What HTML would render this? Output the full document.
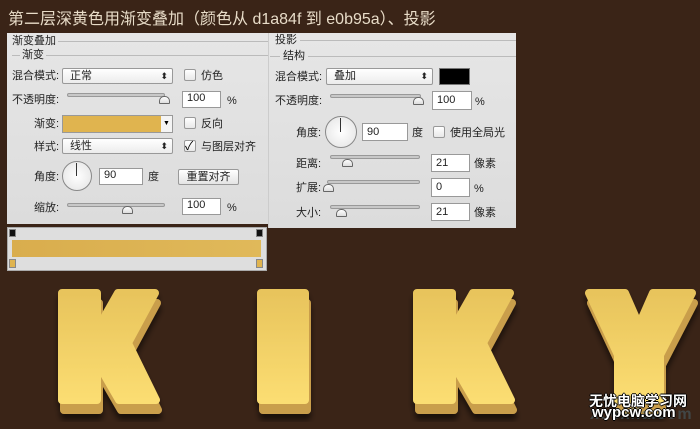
<!DOCTYPE html>
<html><head><meta charset="utf-8"><style>
*{margin:0;padding:0;box-sizing:border-box}
body{width:700px;height:429px;overflow:hidden;background:#3a2417;font-family:"Liberation Sans","Noto Sans CJK SC",sans-serif;position:relative}
.a{position:absolute}
.t{font-size:11px;color:#222;white-space:nowrap;line-height:12px}
.panel{background:linear-gradient(#e6e6e6,#dcdcdc);}
.dd{background:linear-gradient(#fff,#ececec);border:1px solid #999;border-radius:2px;font-size:11px;padding-left:7px;line-height:14px;color:#222}
.dd:after{content:"⬍";position:absolute;right:4px;top:0;font-size:9px}
.in{background:#fff;border:1px solid #999;font-size:11px;padding-left:4px;color:#222}
.cb{background:linear-gradient(#fff,#e8e8e8);border:1px solid #999;border-radius:2px;width:12px;height:12px}
.sl{height:4px;border:1px solid #999;border-radius:2px;background:#c8c8c8}
.th{width:11px;height:8px;border:1px solid #666;border-radius:5px 5px 1px 1px;background:linear-gradient(#fff,#ddd)}
.dial{border-radius:50%;border:1px solid #888;background:radial-gradient(#fff,#e2e2e2)}
.hl{height:1px;background:#bbb}
</style></head><body>
<div class="a" style="left:8px;top:5px;font-size:16px;color:#e8dcc8;white-space:nowrap">第二层深黄色用渐变叠加（颜色从 d1a84f 到 e0b95a）、投影</div>

<div class="a panel" style="left:7px;top:33px;width:261px;height:191px"></div>
<div class="a t" style="left:12px;top:35px">渐变叠加</div><div class="a hl" style="left:58px;top:41px;width:210px"></div>
<div class="a t" style="left:22px;top:49px">渐变</div><div class="a hl" style="left:12px;top:55px;width:8px"></div><div class="a hl" style="left:46px;top:55px;width:222px"></div>
<div class="a t" style="left:12px;top:70px">混合模式:</div>
<div class="a dd" style="left:62px;top:68px;width:111px;height:16px">正常</div>
<div class="a cb" style="left:184px;top:69px"></div><div class="a t" style="left:201px;top:70px">仿色</div>
<div class="a t" style="left:12px;top:94px">不透明度:</div>
<div class="a sl" style="left:67px;top:93px;width:98px"></div><div class="a th" style="left:159px;top:96px"></div>
<div class="a in" style="left:182px;top:91px;width:39px;height:17px">100</div><div class="a t" style="left:227px;top:95px">%</div>
<div class="a t" style="left:34px;top:118px">渐变:</div>
<div class="a" style="left:62px;top:115px;width:111px;height:18px;border:1px solid #999;background:#e0b44f"></div>
<div class="a" style="left:161px;top:116px;width:11px;height:16px;background:#f4f4f4;font-size:7px;text-align:center;line-height:16px">▼</div>
<div class="a cb" style="left:184px;top:117px"></div><div class="a t" style="left:201px;top:118px">反向</div>
<div class="a t" style="left:34px;top:141px">样式:</div>
<div class="a dd" style="left:62px;top:138px;width:111px;height:16px">线性</div>
<div class="a cb" style="left:184px;top:140px;font-size:12px;line-height:10px">✓</div><div class="a t" style="left:201px;top:141px">与图层对齐</div>
<div class="a t" style="left:34px;top:171px">角度:</div>
<div class="a dial" style="left:62px;top:161px;width:30px;height:30px"></div>
<div class="a" style="left:76px;top:163px;width:1px;height:13px;background:#333"></div>
<div class="a in" style="left:99px;top:168px;width:44px;height:17px">90</div><div class="a t" style="left:148px;top:171px">度</div>
<div class="a" style="left:178px;top:169px;width:61px;height:16px;border:1px solid #999;border-radius:2px;background:linear-gradient(#fff,#e4e4e4);font-size:11px;text-align:center;line-height:14px;color:#222">重置对齐</div>
<div class="a t" style="left:34px;top:202px">缩放:</div>
<div class="a sl" style="left:67px;top:203px;width:98px"></div><div class="a th" style="left:122px;top:206px"></div>
<div class="a in" style="left:182px;top:198px;width:39px;height:17px">100</div><div class="a t" style="left:227px;top:202px">%</div>

<div class="a panel" style="left:268px;top:33px;width:248px;height:195px;border-left:1px solid #ccc"></div>
<div class="a t" style="left:275px;top:34px">投影</div><div class="a hl" style="left:300px;top:40px;width:216px"></div>
<div class="a t" style="left:283px;top:50px">结构</div><div class="a hl" style="left:270px;top:56px;width:10px"></div><div class="a hl" style="left:308px;top:56px;width:208px"></div>
<div class="a t" style="left:275px;top:71px">混合模式:</div>
<div class="a dd" style="left:326px;top:68px;width:107px;height:17px">叠加</div>
<div class="a" style="left:439px;top:68px;width:31px;height:17px;background:#000;border:1px solid #777"></div>
<div class="a t" style="left:275px;top:95px">不透明度:</div>
<div class="a sl" style="left:330px;top:94px;width:91px"></div><div class="a th" style="left:413px;top:97px"></div>
<div class="a in" style="left:432px;top:91px;width:40px;height:19px;line-height:17px">100</div><div class="a t" style="left:475px;top:96px">%</div>
<div class="a t" style="left:296px;top:127px">角度:</div>
<div class="a dial" style="left:325px;top:116px;width:32px;height:32px"></div>
<div class="a" style="left:340px;top:118px;width:1px;height:14px;background:#333"></div>
<div class="a in" style="left:362px;top:123px;width:46px;height:18px;line-height:16px">90</div><div class="a t" style="left:412px;top:127px">度</div>
<div class="a cb" style="left:433px;top:126px"></div><div class="a t" style="left:450px;top:127px">使用全局光</div>
<div class="a t" style="left:296px;top:158px">距离:</div>
<div class="a sl" style="left:330px;top:155px;width:90px"></div><div class="a th" style="left:342px;top:159px"></div>
<div class="a in" style="left:431px;top:154px;width:39px;height:18px;line-height:16px">21</div><div class="a t" style="left:474px;top:158px">像素</div>
<div class="a t" style="left:296px;top:182px">扩展:</div>
<div class="a sl" style="left:327px;top:180px;width:93px"></div><div class="a th" style="left:323px;top:184px"></div>
<div class="a in" style="left:431px;top:178px;width:39px;height:19px;line-height:17px">0</div><div class="a t" style="left:474px;top:183px">%</div>
<div class="a t" style="left:296px;top:207px">大小:</div>
<div class="a sl" style="left:330px;top:205px;width:90px"></div><div class="a th" style="left:336px;top:209px"></div>
<div class="a in" style="left:431px;top:203px;width:39px;height:18px;line-height:16px">21</div><div class="a t" style="left:474px;top:207px">像素</div>

<div class="a" style="left:7px;top:227px;width:260px;height:44px;background:#dedede;border:1px solid #aaa"></div>
<div class="a" style="left:12px;top:240px;width:249px;height:17px;background:linear-gradient(90deg,#d9ad4d,#e0b95a)"></div>
<div class="a" style="left:9px;top:229px;width:7px;height:8px;background:#111;border:1px solid #888"></div>
<div class="a" style="left:256px;top:229px;width:7px;height:8px;background:#111;border:1px solid #888"></div>
<div class="a" style="left:9px;top:259px;width:7px;height:9px;background:#e0b44f;border:1px solid #888"></div>
<div class="a" style="left:256px;top:259px;width:7px;height:9px;background:#e0b44f;border:1px solid #888"></div>

<svg class="a" style="left:0;top:0" width="700" height="429">
<defs>
<linearGradient id="g" x1="0" y1="0" x2="0" y2="1"><stop offset="0" stop-color="#e8c45c"/><stop offset="1" stop-color="#fbdd72"/></linearGradient>
<filter id="sh"><feDropShadow dx="0" dy="6" stdDeviation="3" flood-color="#000" flood-opacity="0.55"/></filter>
<g id="K"><polygon points="62,293 97,293 97,330 118,293 155,293 128,343 156,400 119,400 97,362 97,400 62,400"/></g>
<g id="I"><rect x="261" y="293" width="44" height="107"/></g>
<g id="Y"><polygon points="589,293 625,293 639,325 653,293 692,293 660,355 660,400 618,400 618,355"/></g>
</defs>
<g stroke-linejoin="round" stroke-width="8" filter="url(#sh)">
<g fill="#c99e4c" stroke="#c99e4c" transform="translate(2,10)"><use href="#K"/><use href="#I"/><use href="#Y"/><use href="#K" transform="translate(355,0)"/></g>
<g fill="url(#g)" stroke="url(#g)"><use href="#K"/><use href="#I"/><use href="#Y"/><use href="#K" transform="translate(355,0)"/></g>
</g>
</svg>

<div class="a" style="left:590px;top:406px;font-size:16px;font-weight:bold;color:#4a7080;opacity:.45;letter-spacing:1px">xuexila.com</div>
<div class="a" style="left:589px;top:391px;font-size:14px;font-weight:bold;color:#fff;text-shadow:1px 0 #000,-1px 0 #000,0 1px #000,0 -1px #000;white-space:nowrap">无忧电脑学习网</div>
<div class="a" style="left:592px;top:404px;font-size:15px;font-weight:bold;color:#fff;text-shadow:1px 0 #000,-1px 0 #000,0 1px #000,0 -1px #000">wypcw.com</div>
</body></html>
